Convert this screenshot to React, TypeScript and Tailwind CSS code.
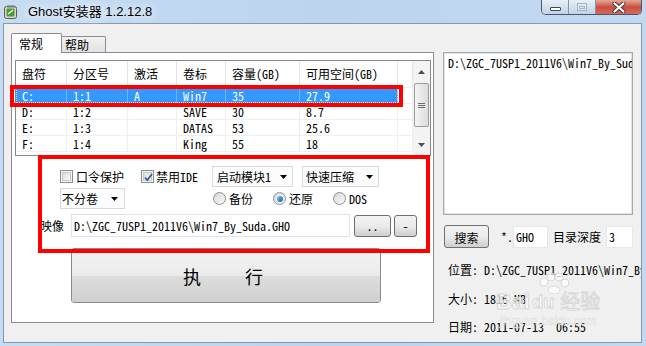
import React from "react";

const UI = "font-['Noto_Sans_Mono_CJK_SC','Liberation_Mono','Noto_Sans_CJK_SC',monospace] text-[12px] leading-[14px] text-black";

function Check({ checked }: { checked?: boolean }) {
  return (
    <span className="relative flex w-[13px] h-[13px] shrink-0 items-center justify-center border border-[#8e8f8f] bg-[#f4f4f4]">
      <span className="w-[9px] h-[9px] border border-[#c7c7c7] bg-gradient-to-br from-[#dcdcdc] to-[#fbfbfb]" />
      {checked && (
        <svg className="absolute left-[1px] top-[1px]" width="11" height="11" viewBox="0 0 11 11">
          <path d="M2 5.5 L4.3 8 L9 2" fill="none" stroke="#3c5a98" strokeWidth="1.8" />
        </svg>
      )}
    </span>
  );
}

function Radio({ checked }: { checked?: boolean }) {
  return (
    <span className="flex w-[13px] h-[13px] shrink-0 items-center justify-center rounded-full border border-[#8f8f8f] bg-gradient-to-br from-[#d6d6d6] to-[#fbfbfb]">
      {checked && <span className="w-[6px] h-[6px] rounded-full bg-gradient-to-br from-[#7cc3f0] to-[#0f5f9c] shadow-[0_0_0_1px_#e8f4fc]" />}
    </span>
  );
}

function Arrow() {
  return (
    <svg width="7" height="4" viewBox="0 0 7 4">
      <path d="M0 0 H7 L3.5 4 Z" fill="#000" />
    </svg>
  );
}

const cols = ["w-[51px]", "w-[61px]", "w-[49px]", "w-[49px]", "w-[74px]", "w-[98px]"];
const heads = ["盘符", "分区号", "激活", "卷标", "容量(GB)", "可用空间(GB)"];
const rows = [
  ["C:", "1:1", "A", "Win7", "35", "27.9"],
  ["D:", "1:2", "", "SAVE", "30", "8.7"],
  ["E:", "1:3", "", "DATAS", "53", "25.6"],
  ["F:", "1:4", "", "King", "55", "18"],
];

export default function App() {
  return (
    <div className="relative w-[646px] h-[346px] overflow-hidden bg-gradient-to-r from-[#c6dcf3] via-[#bcd4ee] to-[#c3d9f1]">
      {/* title bar */}
      <div className="h-[23px] flex items-center pl-[4px]">
        <svg width="14" height="14" viewBox="0 0 14 14">
          <rect x="0.5" y="1.5" width="12" height="12" rx="2" fill="#d8d8cc" stroke="#5d5d50" />
          <rect x="2.5" y="3.5" width="8" height="8" rx="1" fill="#4c9a3a" />
          <path d="M4 9 L9 5" stroke="#e8f5d0" strokeWidth="1.5" />
          <rect x="3" y="0.5" width="8" height="2" fill="#777" />
        </svg>
        <span className="ml-[10px] font-['Liberation_Sans','Noto_Sans_CJK_SC',sans-serif] text-[13px] leading-[18px] text-black [text-shadow:0_0_8px_#fff,0_0_12px_#fff]">
          Ghost安装器 1.2.12.8
        </span>
      </div>

      {/* window buttons */}
      <div className="absolute top-0 right-[4px] flex h-[15px] overflow-hidden rounded-b-[5px] border border-t-0 border-[#47586d]">
        <div className="w-[27px] flex items-center justify-center border-r border-[#8595a9] bg-gradient-to-b from-[#e7eef7] to-[#c2d3e7]">
          <div className="mt-[3px] w-[11px] h-[4px] rounded-[1px] border border-[#3a4a5c] bg-white" />
        </div>
        <div className="w-[27px] flex items-center justify-center border-r border-[#8595a9] bg-gradient-to-b from-[#e7eef7] to-[#c2d3e7]">
          <div className="w-[10px] h-[8px] border border-[#a7b4c3] bg-[#dfe7f1] flex items-center justify-center">
            <div className="w-[6px] h-[3px] border border-[#a7b4c3]" />
          </div>
        </div>
        <div className="w-[45px] flex items-center justify-center bg-gradient-to-b from-[#e5a799] via-[#c94d3f] to-[#d66a5d]">
          <svg width="14" height="11" viewBox="0 0 14 11">
            <path d="M2.5 1.5 L11.5 9.5 M11.5 1.5 L2.5 9.5" stroke="#3a3a3a" strokeWidth="4" strokeLinecap="round" />
            <path d="M2.5 1.5 L11.5 9.5 M11.5 1.5 L2.5 9.5" stroke="#fff" strokeWidth="2.2" strokeLinecap="round" />
          </svg>
        </div>
      </div>

      {/* client area */}
      <div className={`ml-[3px] mr-[4px] h-[320px] overflow-hidden border border-[#8798ac] bg-[#f0f0f0] flex items-start pl-[7px] ${UI}`}>
        {/* left: tab control */}
        <div className="mt-[9px] w-[423px] flex flex-col">
          <div className="relative z-10 flex h-[19px] items-end">
            <div className="-mb-px h-[20px] w-[51px] rounded-t-[2px] border border-b-0 border-[#898c95] bg-white pl-[7px] pt-[3px] text-[12px]">
              常规
            </div>
            <div className="h-[16px] w-[44px] rounded-tr-[2px] border border-l-0 border-b-0 border-[#898c95] bg-gradient-to-b from-[#f2f2f2] to-[#e1e1e1] pl-[3px] pt-[1px]">
              帮助
            </div>
          </div>
          <div className="flex h-[271px] flex-col border border-[#898c95] bg-white">
            {/* list view */}
            <div className="ml-[3px] mt-[7px] flex h-[96px] w-[416px] border border-[#828790] bg-white">
              <div className="flex flex-1 flex-col">
                <div className="flex h-[27px] border-b border-[#ececec]">
                  {heads.map((h, i) => (
                    <div key={i} className={`${cols[i]} flex items-center border-r border-[#e3e3e3] pl-[6px]`}>
                      {h}
                    </div>
                  ))}
                  <div className="flex-1 border-r border-[#e3e3e3]" />
                </div>
                {rows.map((r, ri) => (
                  <div key={ri} className="flex h-[16px] border-b border-[#efefef]">
                    <div className={`flex ${ri === 0 ? "bg-[#3399ff] text-white outline outline-1 outline-dotted outline-offset-[-1px] outline-[#f7d29a]" : ""}`}>
                      {r.map((c, ci) => (
                        <div key={ci} className={`${cols[ci]} flex items-center pl-[6px] ${ri === 0 ? "border-r border-[#6fb6ff]" : "border-r border-[#efefef]"}`}>
                          {c}
                        </div>
                      ))}
                    </div>
                    <div className="flex-1 border-r border-[#efefef]" />
                  </div>
                ))}
              </div>
              {/* scrollbar */}
              <div className="relative flex w-[17px] flex-col items-center bg-[#f3f3f3]">
                <div className="mt-[9px]">
                  <svg width="7" height="4" viewBox="0 0 7 4"><path d="M0 4 H7 L3.5 0 Z" fill="#4d4d4d" /></svg>
                </div>
                <div className="mt-[9px] flex h-[44px] w-[15px] flex-col items-center justify-center gap-[1px] rounded-[2px] border border-[#9b9b9b] bg-gradient-to-r from-[#f4f4f4] to-[#dcdcdc]">
                  <div className="h-px w-[7px] bg-[#6b6b6b]" />
                  <div className="h-px w-[7px] bg-[#6b6b6b]" />
                  <div className="h-px w-[7px] bg-[#6b6b6b]" />
                </div>
                <div className="mt-[16px]">
                  <svg width="7" height="4" viewBox="0 0 7 4"><path d="M0 0 H7 L3.5 4 Z" fill="#4d4d4d" /></svg>
                </div>
              </div>
            </div>

            {/* row 1 */}
            <div className="ml-[48px] mt-[10px] flex h-[21px] items-center">
              <div className="flex w-[81px] items-center gap-[3px]">
                <Check />
                <span>口令保护</span>
              </div>
              <div className="flex w-[71px] items-center gap-[2px]">
                <Check checked />
                <span>禁用IDE</span>
              </div>
              <div className="flex h-[21px] w-[81px] items-center justify-between border border-[#d9d9d9] bg-[#fcfcfc] pl-[4px] pr-[5px]">
                <span>启动模块1</span>
                <Arrow />
              </div>
              <div className="ml-[9px] flex h-[21px] w-[77px] items-center justify-between border border-[#d9d9d9] bg-[#fcfcfc] pl-[3px] pr-[5px]">
                <span>快速压缩</span>
                <Arrow />
              </div>
            </div>

            {/* row 2 */}
            <div className="ml-[48px] mt-[1px] flex h-[21px] items-center">
              <div className="flex h-[21px] w-[65px] items-center justify-between border border-[#d9d9d9] bg-[#fcfcfc] pl-[1px] pr-[6px]">
                <span>不分卷</span>
                <Arrow />
              </div>
              <div className="ml-[88px] flex w-[60px] items-center gap-[3px]">
                <Radio />
                <span>备份</span>
              </div>
              <div className="flex w-[60px] items-center gap-[3px]">
                <Radio checked />
                <span>还原</span>
              </div>
              <div className="flex items-center gap-[3px]">
                <Radio />
                <span>DOS</span>
              </div>
            </div>

            {/* row 3 */}
            <div className="ml-[28px] mt-[5px] flex h-[23px] items-center">
              <span className="w-[31px]">映像</span>
              <div className="flex h-[23px] w-[279px] items-center border border-[#dde3ea] bg-white pl-[2px]">
                D:\ZGC_7USP1_2011V6\Win7_By_Suda.GHO
              </div>
              <div className="ml-[4px] flex h-[22px] w-[37px] items-start justify-center rounded-[3px] border border-[#707070] bg-gradient-to-b from-[#f2f2f2] via-[#ebebeb] to-[#cfcfcf] pt-[3px]">
                ..
              </div>
              <div className="ml-[3px] flex h-[22px] w-[23px] items-center justify-center rounded-[3px] border border-[#707070] bg-gradient-to-b from-[#f2f2f2] via-[#ebebeb] to-[#cfcfcf]">
                -
              </div>
            </div>

            {/* execute button */}
            <div className="ml-[59px] mt-[11px] flex h-[55px] w-[310px] flex-col overflow-hidden rounded-[3px] border border-[#8a8a8a]">
              <div className="h-[27px] bg-gradient-to-b from-[#f3f3f3] to-[#ebebeb]" />
              <div className="relative flex-1 bg-gradient-to-b from-[#dddddd] to-[#cfcfcf]">
                <div className="absolute left-0 right-0 top-[-10px] flex justify-center gap-[44px] text-[18px] leading-[20px]">
                  <span className="ml-[-6px]">执</span>
                  <span>行</span>
                </div>
              </div>
            </div>
          </div>
        </div>

        {/* right column */}
        <div className="ml-[9px] mt-[28px] flex w-[190px] flex-col">
          <div className="h-[163px] border border-[#a3a9b1] bg-white pl-[4px] pt-[3px] shadow-[inset_0_0_0_1px_#e3e3e3] overflow-hidden whitespace-nowrap">
            D:\ZGC_7USP1_2011V6\Win7_By_Suda.GHO
          </div>
          <div className="mt-[10px] flex h-[23px] items-center">
            <div className="ml-[1px] flex h-[23px] w-[45px] items-center justify-center rounded-[3px] border border-[#707070] bg-gradient-to-b from-[#f2f2f2] via-[#ebebeb] to-[#cfcfcf] pt-[2px]">
              搜索
            </div>
            <span className="ml-[12px] w-[12px]">*.</span>
            <div className="flex h-[22px] w-[35px] items-center border border-[#e3e8ee] bg-white pl-[2px]">GHO</div>
            <span className="ml-[5px]">目录深度</span>
            <div className="ml-[5px] flex h-[22px] w-[27px] items-center border border-[#e3e8ee] bg-white pl-[2px]">3</div>
          </div>
          <div className="mt-[15px] whitespace-pre pl-[5px]">位置: D:\ZGC_7USP1_2011V6\Win7_By_Suda.GHO</div>
          <div className="mt-[15px] whitespace-pre pl-[5px]">大小: 1816 MB</div>
          <div className="mt-[14px] whitespace-pre pl-[5px]">日期: 2011-07-13  06:55</div>
        </div>
      </div>

      {/* annotation boxes */}
      <div className="absolute left-[10px] top-[85px] h-[22px] w-[393px] border-4 border-[#ff0000]" />
      <div className="absolute left-[38px] top-[155px] h-[98px] w-[392px] border-4 border-[#ff0000]" />

      {/* watermark */}
      <div className="pointer-events-none absolute left-[496px] top-[272px] flex flex-col items-center font-['Liberation_Sans','Noto_Sans_CJK_SC',sans-serif] text-white/70 [-webkit-text-stroke:1px_#d8d8d8]">
        <svg width="34" height="22" viewBox="0 0 34 22" className="ml-[10px]">
          <g fill="#fff" fillOpacity="0.7" stroke="#d8d8d8">
            <circle cx="8" cy="10" r="4" />
            <circle cx="15" cy="5" r="4" />
            <circle cx="23" cy="5" r="4" />
            <circle cx="29" cy="11" r="4" />
            <ellipse cx="18" cy="18" rx="6" ry="4" />
          </g>
        </svg>
        <div className="mt-[-4px] flex items-end gap-[2px] text-[22px] font-bold leading-[24px]">
          <span>Bai</span>
          <span className="text-[18px]">du</span>
          <span className="ml-[4px] text-[20px] font-normal">经验</span>
        </div>
        <div className="text-[12px] leading-[14px] [-webkit-text-stroke:0.5px_#dcdcdc]">jingyan.baidu.com</div>
      </div>
    </div>
  );
}
